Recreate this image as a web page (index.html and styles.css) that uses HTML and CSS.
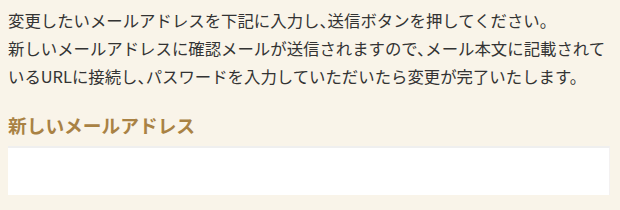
FILE: index.html
```html
<!DOCTYPE html>
<html lang="ja">
<head>
<meta charset="utf-8">
<link rel="stylesheet" href="styles.css">
</head>
<body>
<div class="page">
  <p class="lead">変更したいメールアドレスを下記に入力し、送信ボタンを押してください。<br>新しいメールアドレスに確認メールが送信されますので、メール本文に記載されているURLに接続し、パスワードを入力していただいたら変更が完了いたします。</p>
  <div class="field">
    <label class="label" for="mail">新しいメールアドレス</label>
    <input class="input" id="mail" type="email">
  </div>
</div>
</body>
</html>
```

FILE: styles.css
```css
html, body {
  margin: 0;
  padding: 0;
  background: #f9f4e9;
}
.page {
  padding: 6px 10px 0 8px;
  font-family: "Noto Sans CJK JP", "Noto Sans", sans-serif;
  color: #333333;
}
.lead {
  margin: 0;
  font-size: 16.4px;
  line-height: 28px;
  font-feature-settings: "halt";
}
.field {
  margin-top: 22px;
  display: flex;
  flex-direction: column;
  gap: 8px;
}
.label {
  font-size: 18.72px;
  font-weight: bold;
  line-height: 26px;
  color: #a98244;
}
.input {
  box-sizing: border-box;
  width: 602px;
  height: 49px;
  margin: 0;
  border: none;
  border-top: 2px solid #efefef;
  border-right: 1px solid #f3f1f1;
  background: #ffffff;
  outline: none;
}
```
